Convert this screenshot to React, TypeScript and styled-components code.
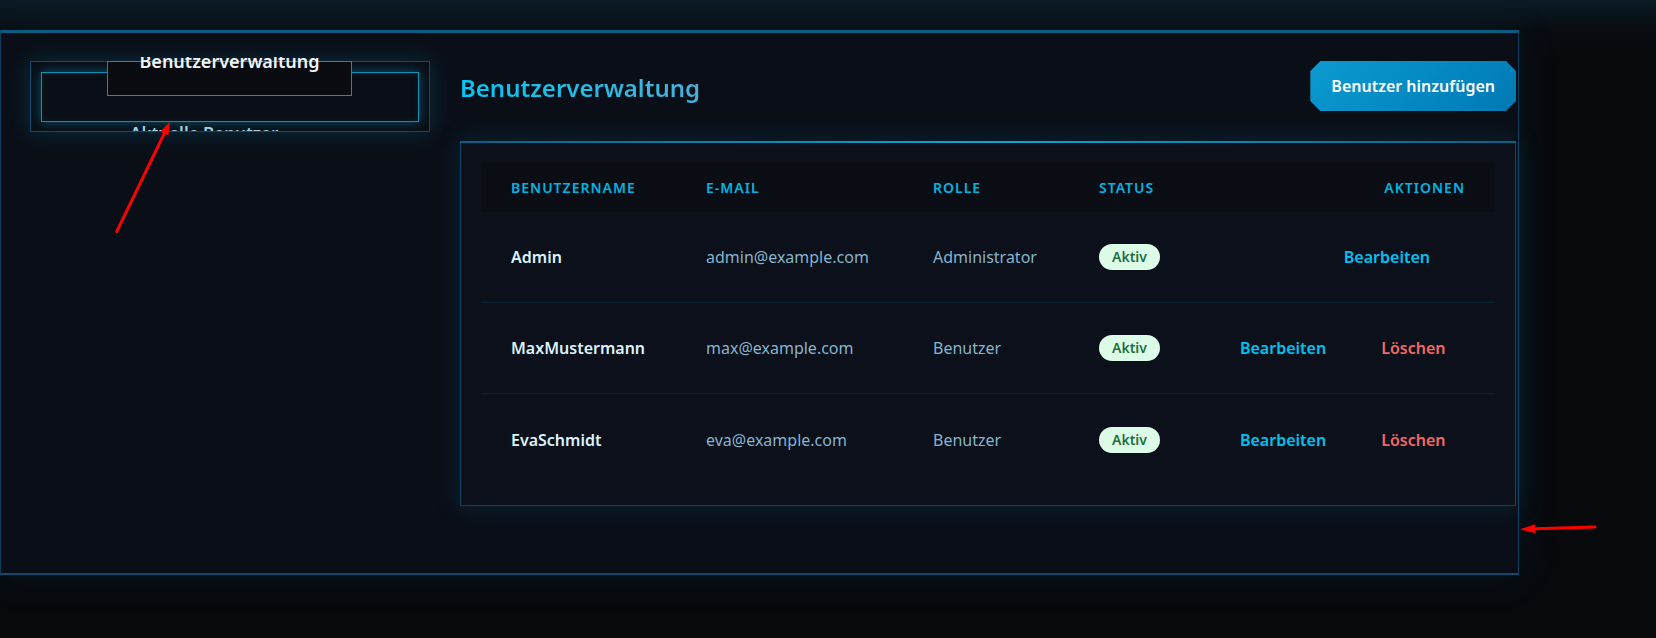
import React from "react";
import styled, { createGlobalStyle } from "styled-components";

const GlobalStyle = createGlobalStyle`
  html, body { margin: 0; padding: 0; background: #08090d; }
  body { font-family: "Noto Sans", "Liberation Sans", sans-serif; }
  * { box-sizing: border-box; }
`;

const Page = styled.div`
  position: relative;
  width: 1656px;
  height: 638px;
  overflow: hidden;
  padding-top: 30px;
  background: linear-gradient(180deg, #0b1c26 0px, #090c11 28px, #08090d 60px);
`;

const Panel = styled.section`
  position: relative;
  width: 1519px;
  height: 545px;
  display: flex;
  gap: 30px;
  padding: 28px 2px 0 29px;
  background: #0a0f17;
  border: 1px solid #0c3f5f;
  border-top: 3px solid #0b5d80;
  border-bottom: 2px solid #0c4a6e;
  box-shadow: 0 0 40px rgba(0, 120, 170, 0.12);
`;

const Sidebar = styled.aside`
  width: 400px;
  flex: none;
  align-self: flex-start;
`;

const NavBox = styled.nav`
  position: relative;
  height: 71px;
  border: 1px solid #0c4b70;
  box-shadow: 0 0 22px rgba(0, 160, 220, 0.22);
`;

const NavClip = styled.div`
  height: 100%;
  overflow: hidden;
  padding: 10px 10px 0;
`;

const ActiveItem = styled.div`
  height: 50px;
  border: 1px solid #0a93b8;
  box-shadow: 0 0 10px rgba(0, 190, 240, 0.4), inset 0 0 6px rgba(0, 190, 240, 0.08);
`;

const NavItem = styled.div`
  margin-top: 2px;
  padding-left: 89px;
  font-size: 17px;
  font-weight: 600;
  line-height: 20px;
  color: #9fcfe0;
`;

const Tab = styled.div`
  position: absolute;
  top: -1px;
  left: 76px;
  width: 245px;
  height: 35px;
  overflow: clip;
  overflow-clip-margin: 5px;
  background: #0a0b10;
  border: 1px solid #0a93b8;
  text-align: center;
`;

const TabText = styled.span`
  display: block;
  margin-top: -11px;
  font-size: 18px;
  font-weight: 600;
  line-height: 20px;
  color: #eef6fa;
`;

const Main = styled.main`
  flex: 1;
  min-width: 0;
  display: flex;
  flex-direction: column;
  gap: 30px;
`;

const Header = styled.div`
  display: flex;
  justify-content: space-between;
  align-items: center;
  height: 50px;
`;

const Title = styled.h2`
  margin: 2px 0 0;
  font-size: 24px;
  font-weight: 600;
  background: linear-gradient(90deg, #00c8f5, #4aaed8);
  -webkit-background-clip: text;
  background-clip: text;
  color: transparent;
`;

const AddButton = styled.button`
  height: 50px;
  padding: 0 21px;
  border: none;
  color: #ffffff;
  font-family: inherit;
  font-size: 16px;
  font-weight: 600;
  background: linear-gradient(135deg, #0a9bd0 0%, #0079b5 100%);
  clip-path: polygon(10px 0, calc(100% - 10px) 0, 100% 10px, 100% calc(100% - 10px), calc(100% - 10px) 100%, 10px 100%, 0 calc(100% - 10px), 0 10px);
`;

const Card = styled.div`
  position: relative;
  border: 1px solid #0c4468;
  background: #0c101a;
  padding: 20px;
  box-shadow: 0 0 25px rgba(0, 140, 200, 0.18);
  &::before {
    content: "";
    position: absolute;
    left: -1px;
    right: -1px;
    top: -1px;
    height: 2px;
    background: linear-gradient(90deg, #0b5f85, #0aa8d8 50%, #0b5f85);
  }
`;

const Row = styled.div<{ $head?: boolean }>`
  display: grid;
  grid-template-columns: 195px 227px 166px 1fr 1fr;
  align-items: center;
  height: ${(p) => (p.$head ? "50px" : "91px")};
  background: ${(p) => (p.$head ? "#0a0d14" : "transparent")};
  border-bottom: ${(p) => (p.$head ? "none" : "1px solid #0f2433")};
  &:last-child {
    border-bottom: none;
  }
`;

const HeadCell = styled.div<{ $right?: boolean }>`
  padding: 0 30px;
  font-size: 14px;
  font-weight: 600;
  letter-spacing: 1px;
  text-transform: uppercase;
  color: #00b5e2;
  text-align: ${(p) => (p.$right ? "right" : "left")};
`;

const Cell = styled.div<{ $strong?: boolean }>`
  padding: 0 30px;
  font-size: 16px;
  font-weight: ${(p) => (p.$strong ? 600 : 400)};
  color: ${(p) => (p.$strong ? "#dcf2fb" : "#86b4cc")};
`;

const ActionCell = styled.div`
  padding: 0 30px;
  display: flex;
  justify-content: flex-end;
  align-items: center;
`;

const Badge = styled.span`
  display: inline-block;
  padding: 3px 13px;
  border-radius: 13px;
  background: #dcfce7;
  color: #1f6f3f;
  font-size: 14px;
  font-weight: 600;
  line-height: 20px;
`;

const ActionButton = styled.button<{ $danger?: boolean }>`
  background: none;
  border: none;
  padding: 6px 20px;
  font-family: inherit;
  font-size: 16px;
  font-weight: 600;
  color: ${(p) => (p.$danger ? "#f06868" : "#00c2ef")};
  margin-right: ${(p) => (p.$danger ? "0" : "15px")};
`;

const Annotations = styled.svg`
  position: absolute;
  left: 0;
  top: 0;
  width: 1656px;
  height: 638px;
  pointer-events: none;
`;

type User = { name: string; email: string; role: string; canDelete: boolean };

const users: User[] = [
  { name: "Admin", email: "admin@example.com", role: "Administrator", canDelete: false },
  { name: "MaxMustermann", email: "max@example.com", role: "Benutzer", canDelete: true },
  { name: "EvaSchmidt", email: "eva@example.com", role: "Benutzer", canDelete: true },
];

export default function App() {
  return (
    <>
      <GlobalStyle />
      <Page>
        <Panel>
          <Sidebar>
            <NavBox>
              <NavClip>
                <ActiveItem />
                <NavItem>Aktuelle Benutzer</NavItem>
              </NavClip>
              <Tab>
                <TabText>Benutzerverwaltung</TabText>
              </Tab>
            </NavBox>
          </Sidebar>
          <Main>
            <Header>
              <Title>Benutzerverwaltung</Title>
              <AddButton>Benutzer hinzufügen</AddButton>
            </Header>
            <Card>
              <Row $head>
                <HeadCell>Benutzername</HeadCell>
                <HeadCell>E-Mail</HeadCell>
                <HeadCell>Rolle</HeadCell>
                <HeadCell>Status</HeadCell>
                <HeadCell $right>Aktionen</HeadCell>
              </Row>
              {users.map((u) => (
                <Row key={u.name}>
                  <Cell $strong>{u.name}</Cell>
                  <Cell>{u.email}</Cell>
                  <Cell>{u.role}</Cell>
                  <Cell>
                    <Badge>Aktiv</Badge>
                  </Cell>
                  <ActionCell>
                    <ActionButton>Bearbeiten</ActionButton>
                    {u.canDelete && <ActionButton $danger>Löschen</ActionButton>}
                  </ActionCell>
                </Row>
              ))}
            </Card>
          </Main>
        </Panel>
        <Annotations viewBox="0 0 1656 638">
          <line x1="116.7" y1="231.7" x2="164.3" y2="133.4" stroke="#ff0000" strokeWidth="3" strokeLinecap="round" />
          <polygon points="170,121.7 168.4,135.4 160.2,131.4" fill="#ff0000" />
          <line x1="1595" y1="527" x2="1535" y2="528.8" stroke="#ff0000" strokeWidth="3" strokeLinecap="round" />
          <polygon points="1520,529.3 1535.1,533.3 1534.9,524.3" fill="#ff0000" />
        </Annotations>
      </Page>
    </>
  );
}
